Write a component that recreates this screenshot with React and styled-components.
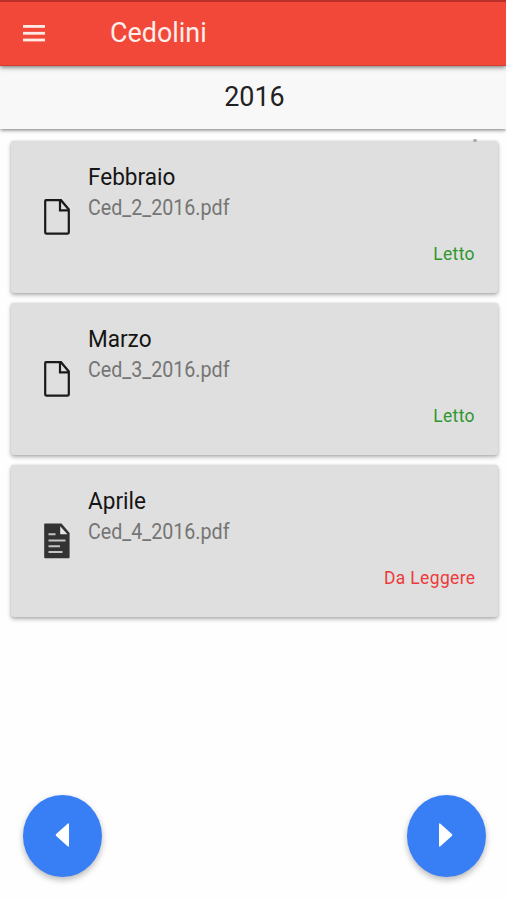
import React from "react";
import styled, { createGlobalStyle } from "styled-components";

const payslips = [
  { month: "Febbraio", file: "Ced_2_2016.pdf", read: true },
  { month: "Marzo", file: "Ced_3_2016.pdf", read: true },
  { month: "Aprile", file: "Ced_4_2016.pdf", read: false },
];

function MenuIcon() {
  return (
    <svg width="22" height="17" viewBox="0 0 22 17" fill="#ffe9e4">
      <rect y="0" width="22" height="2.8" />
      <rect y="6.9" width="22" height="2.8" />
      <rect y="13.6" width="22" height="2.8" />
    </svg>
  );
}

function FileIcon({ read }) {
  if (read) {
    return (
      <svg width="26" height="36" viewBox="0 0 26 36" fill="none">
        <path
          d="M2 1.2H17L24.8 10.5V33.6Q24.8 34.6 23.8 34.6H2.2Q1.2 34.6 1.2 33.6V2Q1.2 1.2 2 1.2Z"
          stroke="#1a1a1a"
          strokeWidth="2.2"
        />
        <path d="M16 2V11.3H24" stroke="#1a1a1a" strokeWidth="2.2" />
      </svg>
    );
  }
  return (
    <svg width="26" height="36" viewBox="0 0 26 36" fill="none">
      <path
        d="M1 0.5H17.5L25.6 10V34.2Q25.6 35.2 24.6 35.2H1.2Q0.2 35.2 0.2 34.2V1.3Q0.2 0.5 1 0.5Z"
        fill="#333"
      />
      <path d="M16.2 3.2V11.3H23.4Z" fill="#e6e6e6" />
      <path
        d="M4.5 11.2H11.5M4.5 17.5H21.5M4.5 23.3H16M4.5 29H18.5"
        stroke="#c4c4c4"
        strokeWidth="2"
      />
    </svg>
  );
}

function ArrowIcon({ next }) {
  return (
    <svg width="16" height="24" viewBox="0 0 16 24" fill="#fff">
      {next ? (
        <path d="M1 1.3Q1 -0.4 2.4 0.8L13.8 11Q14.8 12 13.8 13L2.4 23.2Q1 24.4 1 22.7Z" />
      ) : (
        <path d="M15 1.3Q15 -0.4 13.6 0.8L2.2 11Q1.2 12 2.2 13L13.6 23.2Q15 24.4 15 22.7Z" />
      )}
    </svg>
  );
}

function App() {
  return (
    <Page>
      <GlobalStyle />
      <Toolbar>
        <MenuButton aria-label="Menu">
          <MenuIcon />
        </MenuButton>
        <Title>Cedolini</Title>
      </Toolbar>
      <YearBar>
        <Year>2016</Year>
      </YearBar>
      <List>
        {payslips.map((item) => (
          <Card key={item.file}>
            <IconCell>
              <FileIcon read={item.read} />
            </IconCell>
            <Details>
              <Month>{item.month}</Month>
              <FileName>{item.file}</FileName>
              <Status $read={item.read}>
                {item.read ? "Letto" : "Da Leggere"}
              </Status>
            </Details>
          </Card>
        ))}
        <ScrollDot />
      </List>
      <Footer>
        <RoundButton aria-label="Anno precedente">
          <ArrowIcon />
        </RoundButton>
        <RoundButton aria-label="Anno successivo">
          <ArrowIcon next />
        </RoundButton>
      </Footer>
    </Page>
  );
}

export default App;

const GlobalStyle = createGlobalStyle`
  * {
    box-sizing: border-box;
  }
  body {
    margin: 0;
    background: #fff;
    font-family: Roboto, "Liberation Sans", sans-serif;
  }
`;

const Page = styled.div`
  display: flex;
  flex-direction: column;
  width: 506px;
  height: 900px;
  overflow: hidden;
  background: #fefefe;
`;

const Toolbar = styled.header`
  display: flex;
  align-items: center;
  height: 66px;
  flex-shrink: 0;
  padding-left: 23px;
  background: #f1483a;
  border-top: 2px solid #b92f29;
  border-bottom: 1px solid #d43d30;
  box-shadow: 0 1px 5px rgba(0, 0, 0, 0.6);
  z-index: 2;
`;

const MenuButton = styled.button`
  display: flex;
  padding: 0;
  border: 0;
  background: none;
`;

/* glyphs are slightly condensed throughout the app */
const Text = styled.span`
  display: block;
  width: fit-content;
  transform: scaleX(0.96);
  transform-origin: left;
  white-space: nowrap;
`;

const Title = styled(Text).attrs({ as: "h1" })`
  margin: 0 0 2px 65px;
  font-size: 28px;
  line-height: 34px;
  font-weight: 400;
  color: #ffeeea;
`;

const YearBar = styled.div`
  display: flex;
  justify-content: center;
  height: 63px;
  flex-shrink: 0;
  padding: 14px 0 0 2px;
  background: #f8f8f8;
  box-shadow: 0 1px 4px rgba(0, 0, 0, 0.55);
  z-index: 1;
`;

const Year = styled(Text)`
  transform-origin: center;
  font-size: 28px;
  line-height: 34px;
  color: #222;
`;

const List = styled.main`
  position: relative;
  display: flex;
  flex-direction: column;
  gap: 10px;
  padding: 12px 8px 0 11px;
`;

const Card = styled.section`
  display: flex;
  height: 152px;
  padding: 20px 23px 0 33px;
  background: #dfdfdf;
  border-radius: 3px;
  box-shadow: 0 2px 4px rgba(0, 0, 0, 0.32), 0 0 2px rgba(0, 0, 0, 0.12);
`;

const IconCell = styled.div`
  width: 44px;
  flex-shrink: 0;
  padding-top: 38px;
`;

const Details = styled.div`
  display: flex;
  flex-direction: column;
  flex: 1;
`;

const Month = styled(Text)`
  transform: scaleX(0.94);
  font-size: 24px;
  line-height: 32px;
  color: #151515;
`;

const FileName = styled(Text)`
  transform: scaleX(0.915);
  font-size: 21.5px;
  line-height: 29px;
  color: #757575;
`;

const Status = styled(Text)`
  align-self: flex-end;
  margin-top: 20px;
  transform: scaleX(0.93);
  transform-origin: right;
  font-size: 18.8px;
  line-height: 24px;
  letter-spacing: 0.4px;
  color: ${(props) => (props.$read ? "#2f962f" : "#ec3b3b")};
`;

/* tip of the scroll indicator over the first card */
const ScrollDot = styled.span`
  position: absolute;
  top: 10px;
  right: 29px;
  width: 4px;
  height: 3px;
  border-radius: 2px;
  background: #aaa;
`;

const Footer = styled.footer`
  display: flex;
  justify-content: space-between;
  margin-top: auto;
  padding: 0 20px 23px 23px;
`;

const RoundButton = styled.button`
  display: flex;
  align-items: center;
  justify-content: center;
  width: 79px;
  height: 82px;
  padding: 0 2px 3px 0;
  border: 0;
  border-radius: 50%;
  background: #387ef5;
  box-shadow: 0 3px 6px rgba(0, 0, 0, 0.28);
`;
